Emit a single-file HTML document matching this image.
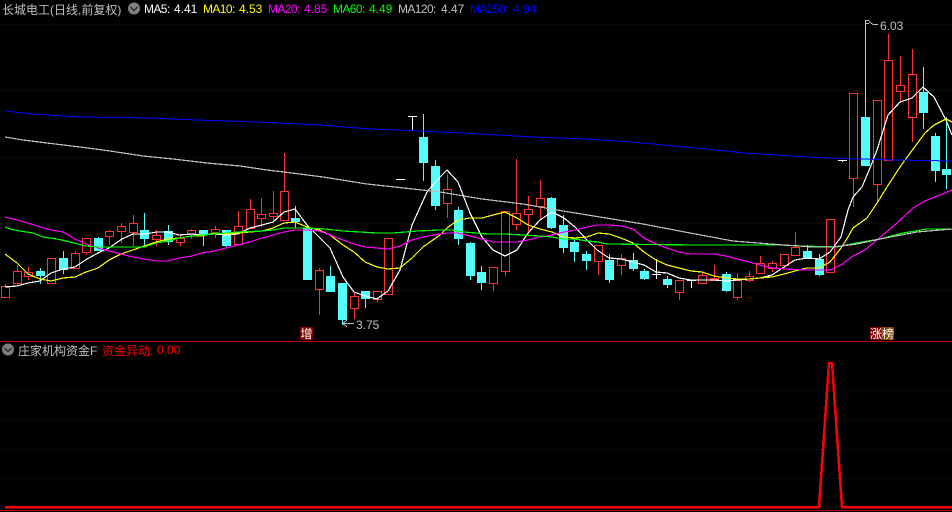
<!DOCTYPE html>
<html><head><meta charset="utf-8"><style>
html,body{margin:0;padding:0;background:#000;width:952px;height:512px;overflow:hidden}
svg{display:block}
text{font-family:"Liberation Sans","WenQuanYi Zen Hei","Noto Sans CJK SC",sans-serif;font-size:12px}
.l{letter-spacing:-.6px}
</style></head><body>
<svg width="952" height="512" viewBox="0 0 952 512" xmlns="http://www.w3.org/2000/svg">
<rect width="952" height="512" fill="#000"/>
<g shape-rendering="crispEdges">
<g stroke="#800000" stroke-width="1" stroke-dasharray="1 3" fill="none">
<path d="M1 24.5H952M1 90.5H952M1 157.5H952M1 223.5H952M1 290.5H952M1 390.5H952M1 419.5H952M1 449.5H952M1 478.5H952"/>
</g>
<path d="M0 341.5H952M0 510.5H952" stroke="#c00000" fill="none"/>

<!-- red candles -->
<path fill="none" stroke="#ff3232" d="
M5.5 284V286M1.5 286.5H9.5V297.5H1.5Z
M17.5 265V271M13.5 271.5H21.5V283.5H13.5ZM17.5 284V285
M28.5 267V272M24.5 272.5H32.5V276.5H24.5ZM28.5 277V280
M47.5 258.5H55.5V283.5H47.5Z
M75.5 251V253M71.5 253.5H79.5V268.5H71.5Z
M82.5 238.5H90.5V252.5H82.5ZM86.5 253V255
M109.5 230V231M105.5 231.5H113.5V236.5H105.5ZM109.5 237V245
M121.5 223V226M117.5 226.5H125.5V231.5H117.5ZM121.5 232V243
M133.5 215V223M129.5 223.5H137.5V232.5H129.5ZM133.5 233V246
M156.5 230V235M152.5 235.5H160.5V239.5H152.5ZM156.5 240V246
M180.5 234V238M176.5 238.5H184.5V242.5H176.5ZM180.5 243V246
M191.5 229V230M187.5 230.5H195.5V234.5H187.5ZM191.5 235V239
M215.5 226V229M211.5 229.5H219.5V233.5H211.5ZM215.5 234V238
M238.5 211V226M234.5 226.5H242.5V244.5H234.5Z
M250.5 199V209M246.5 209.5H254.5V228.5H246.5Z
M261.5 198V214M257.5 214.5H265.5V218.5H257.5ZM261.5 219V227
M273.5 191V213M269.5 213.5H277.5V216.5H269.5ZM273.5 217V223
M284.5 153V191M280.5 191.5H288.5V220.5H280.5Z
M319.5 268V270M315.5 270.5H323.5V289.5H315.5ZM319.5 290V315
M354.5 293V296M350.5 296.5H358.5V308.5H350.5ZM354.5 309V319
M373.5 291.5H381.5V299.5H373.5ZM377.5 300V302
M384.5 238.5H392.5V294.5H384.5Z
M447.5 174V189M443.5 189.5H451.5V203.5H443.5ZM447.5 204V218
M489.5 267.5H497.5V283.5H489.5ZM493.5 284V291
M501.5 211.5H509.5V271.5H501.5ZM505.5 272V276
M516.5 159V213M512.5 213.5H520.5V224.5H512.5ZM516.5 225V230
M528.5 196V209M524.5 209.5H532.5V214.5H524.5ZM528.5 215V234
M540.5 180V198M536.5 198.5H544.5V206.5H536.5ZM540.5 207V220
M594.5 245.5H602.5V261.5H594.5ZM598.5 262V275
M621.5 254V258M617.5 258.5H625.5V265.5H617.5ZM621.5 266V275
M675.5 280.5H683.5V292.5H675.5ZM679.5 293V300
M702.5 273V275M698.5 275.5H706.5V283.5H698.5Z
M714.5 265V278M710.5 278.5H718.5V280.5H710.5Z
M737.5 273V280M733.5 280.5H741.5V297.5H733.5ZM737.5 298V300
M749.5 271V276M745.5 276.5H753.5V280.5H745.5ZM749.5 281V282
M760.5 256V263M756.5 263.5H764.5V273.5H756.5Z
M772.5 261V263M768.5 263.5H776.5V268.5H768.5ZM772.5 269V272
M780.5 254.5H788.5V265.5H780.5ZM784.5 266V268
M795.5 232V247M791.5 247.5H799.5V255.5H791.5Z
M826.5 219.5H834.5V272.5H826.5Z
M849.5 93.5H857.5V178.5H849.5ZM853.5 179V207
M873.5 100.5H881.5V184.5H873.5ZM877.5 185V201
M888.5 34V60M884.5 60.5H892.5V160.5H884.5Z
M900.5 56V85M896.5 85.5H904.5V91.5H896.5ZM900.5 92V103
M912.5 49V74M908.5 74.5H916.5V117.5H908.5ZM912.5 118V142
"/>
<rect x="710" y="278" width="9" height="3" fill="#ff3232"/>

<!-- cyan wicks -->
<path fill="none" stroke="#54fcfc" d="
M40.5 268V284M63.5 251V274M98.5 237V250M144.5 213V245M168.5 225V245M203.5 230V246M226.5 230V247
M295.5 206V228M307.5 227V280M330.5 266V292M342.5 283V325M365.5 291V308
M423.5 114V181M435.5 160V210M458.5 207V245M470.5 242V280M481.5 266V290
M551.5 197V229M563.5 215V253M574.5 239V262M586.5 251V270M609.5 254V283M633.5 253V271M644.5 269V280
M667.5 276V288M726.5 272V292M807.5 245V258M819.5 254V276M865.5 20V166M923.5 67V129M935.5 133V182M946.5 117V189"/>
<!-- cyan bodies -->
<path fill="#54fcfc" d="
M36 271h9v5h-9z
M59 258h9v12h-9z
M94 238h9v13h-9z
M140 230h9v9h-9z
M164 231h9v11h-9z
M199 230h9v5h-9z
M222 230h9v16h-9z
M291 218h9v4h-9z
M303 228h9v52h-9z
M326 276h9v16h-9z
M338 283h9v37h-9z
M361 291h9v8h-9z
M419 137h9v26h-9z
M431 166h9v40h-9z
M454 210h9v29h-9z
M466 243h9v33h-9z
M477 272h9v11h-9z
M547 198h9v30h-9z
M559 225h9v23h-9z
M570 242h9v10h-9z
M582 254h9v7h-9z
M605 260h9v20h-9z
M629 260h9v9h-9z
M640 271h9v8h-9z
M663 279h9v6h-9z
M722 274h9v17h-9z
M803 251h9v8h-9z
M815 259h9v16h-9z
M861 117h9v49h-9z
M919 92h9v21h-9z
M931 136h9v35h-9z
M942 169h9v6h-9z"/>

<!-- white dojis -->
<path fill="none" stroke="#fff" d="M408 116.5H417M412.5 116V131M396 179.5H405M652 274.5H661M656.5 259V279M687 280.5H696M691.5 280V288M838 160.5H847M842.5 160V162"/>

<!-- MA lines -->
<g fill="none" stroke-width="1.2">
<polyline stroke="#fff" points="5,287 17,286 28,283 40,281 51,273 63,269 75,267 87,259 98,253 109,248 122,239 133,234 145,234 157,232 168,232 179,235 192,234 202,235 214,234 226,235 238,234 250,228 262,225 273,222 284,212 295,209 307,225 319,237 330,248 343,277 354,292 365,296 377,299 388,291 400,270 412,225 427,192 440,177 447,170 458,182 470,213 482,237 493,250 505,256 517,250 528,233 540,220 552,212 564,218 575,227 587,240 597,250 609,258 621,259 633,262 644,265 656,272 667,273 679,278 691,280 702,280 714,280 726,281 737,280 749,279 760,278 772,275 784,267 795,260 807,258 819,259 830,252 841,237 848,210 853,197 862,187 870,168 877,150 888,115 900,102 912,98 923,87 934,97 946,120 952,135"/>
<polyline stroke="#ffff00" points="5,254 17,263 28,274 40,279 51,281 63,278 75,277 86,272 98,268 109,260 121,254 133,250 144,246 156,242 168,239 179,238 192,236 202,236 214,233 226,234 238,233 250,232 262,231 273,228 284,223 295,222 307,227 319,230 330,235 343,245 354,252 365,262 377,267 388,269 400,268 412,258 423,247 440,235 447,228 458,220 470,218 482,218 493,215 505,212 517,218 528,225 540,229 552,232 564,237 575,238 587,237 598,233 609,234 621,238 633,243 644,252 656,260 667,265 679,268 691,271 702,272 714,276 726,278 737,279 749,279 760,278 772,277 784,274 795,271 807,268 819,268 830,262 841,248 848,237 853,228 867,218 877,203 887,187 898,170 905,160 925,133 934,125 946,119 952,122"/>
<polyline stroke="#ff00ff" points="5,217 17,220 28,223 40,227 51,230 63,232 75,239 86,244 98,248 109,251 121,254 133,257 144,259 156,261 168,261 179,258 192,256 202,253 214,251 226,248 238,245 250,242 262,238 273,235 284,232 295,230 307,230 319,231 330,235 343,240 354,244 365,247 377,248 388,249 400,246 412,240 423,237 440,234 447,233 458,233 470,236 482,239 493,242 505,242 517,242 528,240 540,237 552,235 564,232 575,230 587,227 598,225 610,225 621,226 633,229 644,238 656,244 667,248 679,252 691,254 702,254 714,254 726,256 737,259 749,262 760,265 772,268 784,269 807,270 830,270 841,265 853,256 865,250 877,240 897,223 913,208 925,201 940,195 952,190"/>
<polyline stroke="#00ff00" points="5,227 10,229 20,231 33,233 43,237 57,239 70,242 86,246 98,247 121,247 133,247 144,247 156,243 168,241 179,238 192,236 214,234 238,232 262,231 273,230 284,228 307,228 325,229 343,231 360,232 377,233 393,233 418,231 440,230 452,230 464,232 476,233 488,234 505,234 523,235 540,236 552,237 564,239 575,239 587,241 598,242 607,244 696,245 720,245 780,245 802,246 837,247 856,243 880,239 903,233 927,229 952,229"/>
<polyline stroke="#c0c0c0" points="5,137 23,140 47,143 80,147 110,151 143,156 173,159 207,163 240,166 267,170 284,172 323,177 367,184 413,189 440,192 482,199 523,204 563,211 600,217 643,224 690,233 733,241 770,244 813,247 833,247 857,244 880,239 917,232 952,229"/>
<polyline stroke="#0000ff" stroke-width="1" points="5,111 33,114 80,117 150,118 197,120 257,122 320,125 370,129 420,131 463,133 533,137 587,139 632,142 685,147 745,153 825,158 895,160 952,161"/>
</g>

<!-- indicator -->
<polyline fill="none" stroke="#ff0000" stroke-width="2.5" points="5,507 819,507 829,363 832,363 842,507 952,507"/>

<!-- annotation arrows -->
<path fill="none" stroke="#c0c0c0" d="M865.5 20.5H869M866 23.5H869M869 21.5L873 24.5H878"/>
<path fill="none" stroke="#c0c0c0" d="M343 323.5H354M343 323.5L347 320M343 323.5L347 327"/>

<!-- tags -->
<rect x="300" y="327" width="13" height="13" fill="#800000"/>
<rect x="870" y="327" width="11" height="13" fill="#800000"/>
<rect x="881" y="327" width="13" height="13" fill="#804000"/>
</g>

<!-- icons -->
<circle cx="134" cy="8.5" r="6" fill="#808080"/>
<path d="M130.5 7L134 10.5L137.5 7" fill="none" stroke="#2a2a2a" stroke-width="1.4"/>
<circle cx="8" cy="349.5" r="6" fill="#808080"/>
<path d="M4.5 348L8 351.5L11.5 348" fill="none" stroke="#2a2a2a" stroke-width="1.4"/>

<!-- text -->
<text x="2" y="14" fill="#c0c0c0">长城电工(日线,前复权)</text>
<text class="l" x="144" y="13" fill="#fff">MA5:</text><text x="174" y="13" fill="#fff">4.41</text>
<text class="l" x="203" y="13" fill="#ffff00">MA10:</text><text x="239" y="13" fill="#ffff00">4.53</text>
<text class="l" x="268" y="13" fill="#ff00ff">MA20:</text><text x="304" y="13" fill="#ff00ff">4.85</text>
<text class="l" x="333" y="13" fill="#00ff00">MA60:</text><text x="369" y="13" fill="#00ff00">4.49</text>
<text class="l" x="398" y="13" fill="#c0c0c0">MA120:</text><text x="441" y="13" fill="#c0c0c0">4.47</text>
<text class="l" x="470" y="13" fill="#0000ff">MA250:</text><text x="513" y="13" fill="#0000ff">4.94</text>
<text x="880" y="30" fill="#c0c0c0">6.03</text>
<text x="356" y="329" fill="#c0c0c0">3.75</text>
<text x="300.5" y="338" fill="#fff">增</text>
<text x="870" y="338" fill="#fff">涨</text>
<text x="882" y="338" fill="#fff">榜</text>
<text x="18" y="355" fill="#c0c0c0">庄家机构资金F</text>
<text x="102" y="355" fill="#ff0000">资金异动:</text>
<text x="157" y="354" fill="#ff0000">0.00</text>
</svg>
</body></html>
